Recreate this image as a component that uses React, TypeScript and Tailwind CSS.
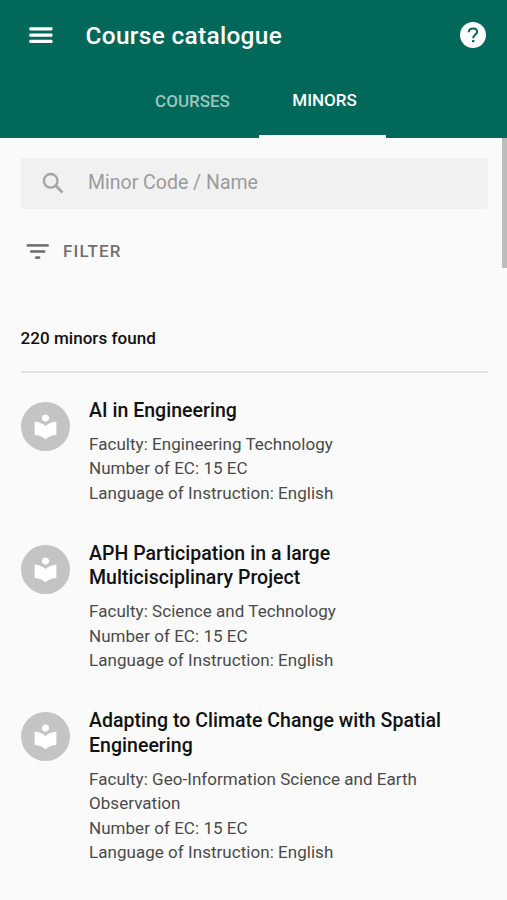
import React, { useState } from 'react';
import { MdLocalLibrary } from 'react-icons/md';

interface Minor {
  name: string;
  faculty: string;
  ec: number;
  language: string;
}

const MenuIcon = () => (
  <svg width="24" height="17" viewBox="0 0 24 17" fill="currentColor">
    <rect x="0.2" y="0.2" width="23.4" height="3.2" rx="1.3" />
    <rect x="0.2" y="6.5" width="23.4" height="3.2" rx="1.3" />
    <rect x="0.2" y="12.8" width="23.4" height="3.2" rx="1.3" />
  </svg>
);

const HelpIcon = () => (
  <svg width="26" height="26" viewBox="0 0 26 26" fill="none">
    <circle cx="13" cy="13" r="13" fill="#fff" />
    <path
      d="M8.8 10.2C8.8 7.8 10.6 6.5 13 6.5C15.4 6.5 17.1 7.9 17.1 9.9C17.1 12.6 13.2 12.7 13.2 16.3"
      stroke="#02685a"
      strokeWidth="2"
    />
    <rect x="12" y="17.9" width="2.4" height="2.4" rx="0.6" fill="#02685a" />
  </svg>
);

const SearchIcon = () => (
  <svg width="29" height="29" viewBox="0 0 29 29" fill="none" stroke="#a6a6a6" strokeWidth="2.4">
    <circle cx="11.7" cy="11.8" r="6.8" />
    <path d="M16.5 16.6L23.5 23.6" strokeWidth="2.8" />
  </svg>
);

const FilterIcon = () => (
  <svg width="29" height="29" viewBox="0 0 29 29" fill="currentColor">
    <rect x="3.7" y="7.1" width="22" height="2.6" />
    <rect x="7.2" y="13.2" width="15" height="2.6" />
    <rect x="12.2" y="19.3" width="5" height="2.6" />
  </svg>
);

const MinorItem = ({ minor }: { minor: Minor }) => (
  <li className="flex items-start gap-[19.5px]">
    <div className="mt-[3px] flex h-[49px] w-[49px] shrink-0 items-center justify-center rounded-full bg-[#c4c4c4] text-white">
      <MdLocalLibrary className="h-[29px] w-[29px]" />
    </div>
    <div className="w-[365px]">
      <h3 className="text-[19.5px] leading-[24.5px] font-medium tracking-[0.03px] text-[#111111]">
        {minor.name}
      </h3>
      <div className="mt-[8.4px] text-[17px] leading-[24.5px] tracking-[0.04px] text-[#4a4a4a]">
        <p>Faculty: {minor.faculty}</p>
        <p>Number of EC: {minor.ec} EC</p>
        <p>Language of Instruction: {minor.language}</p>
      </div>
    </div>
  </li>
);

const App = () => {
  const [tab, setTab] = useState('minors');
  const [query, setQuery] = useState('');

  return (
    <div className="relative h-[900px] w-[507px] overflow-hidden bg-[#fafafa] font-['Roboto',sans-serif]">
      {/* Header */}
      <header className="flex h-[137.5px] flex-col bg-[#02685a] text-white">
        <div className="flex h-[70px] items-center pr-[21.3px] pl-[29px]">
          <button aria-label="Menu">
            <MenuIcon />
          </button>
          <h1 className="ml-[32.5px] grow pt-px text-[24.4px] leading-8 font-medium tracking-[0.33px]">
            Course catalogue
          </h1>
          <button aria-label="Help">
            <HelpIcon />
          </button>
        </div>
        <nav className="flex grow justify-center pl-[5px]">
          <button
            onClick={() => setTab('courses')}
            className={`w-[133px] border-b-[3px] pb-[2px] text-[17px] font-medium ${
              tab === 'courses' ? 'border-[#fafafa]' : 'border-transparent text-[#9bc5be]'
            }`}
          >
            COURSES
          </button>
          <button
            onClick={() => setTab('minors')}
            className={`w-[127px] border-b-[3px] pb-[4px] pl-[4px] text-[17px] font-medium ${
              tab === 'minors' ? 'border-[#fafafa]' : 'border-transparent text-[#9bc5be]'
            }`}
          >
            MINORS
          </button>
        </nav>
      </header>

      {/* Search and results */}
      <main className="pt-5 pl-[20.5px]">
        <div className="flex h-[51px] w-[467.5px] items-center rounded-[2px] bg-[#f1f1f1] pl-[18px]">
          <SearchIcon />
          <input
            value={query}
            onChange={(e) => setQuery(e.target.value)}
            placeholder="Minor Code / Name"
            className="ml-[20.5px] grow bg-transparent text-[19.5px] text-[#555555] outline-none placeholder:text-[#9b9b9b]"
          />
        </div>

        <button className="mt-7 ml-[2.5px] flex h-[30px] items-center text-[#717171]">
          <FilterIcon />
          <span className="ml-[11px] text-[17px] font-medium tracking-[1.1px]">FILTER</span>
        </button>

        <p className="mt-[59px] text-[17px] leading-[24.5px] font-medium tracking-[0.05px] text-[#111111]">
          220 minors found
        </p>
        <hr className="mt-[20.5px] w-[467.5px] border-t-2 border-[#e2e2e2]" />

        <ul className="mt-[26.4px] flex flex-col gap-[36.5px]">
          {minors.map((minor) => (
            <MinorItem key={minor.name} minor={minor} />
          ))}
        </ul>
      </main>

      {/* Scroll indicator */}
      <div className="absolute top-[138px] right-0 h-[130px] w-[5px] bg-[#bcbcbc]" />
    </div>
  );
};

const minors: Minor[] = [
  {
    name: 'AI in Engineering',
    faculty: 'Engineering Technology',
    ec: 15,
    language: 'English'
  },
  {
    name: 'APH Participation in a large Multicisciplinary Project',
    faculty: 'Science and Technology',
    ec: 15,
    language: 'English'
  },
  {
    name: 'Adapting to Climate Change with Spatial Engineering',
    faculty: 'Geo-Information Science and Earth Observation',
    ec: 15,
    language: 'English'
  }
];

export default App;
